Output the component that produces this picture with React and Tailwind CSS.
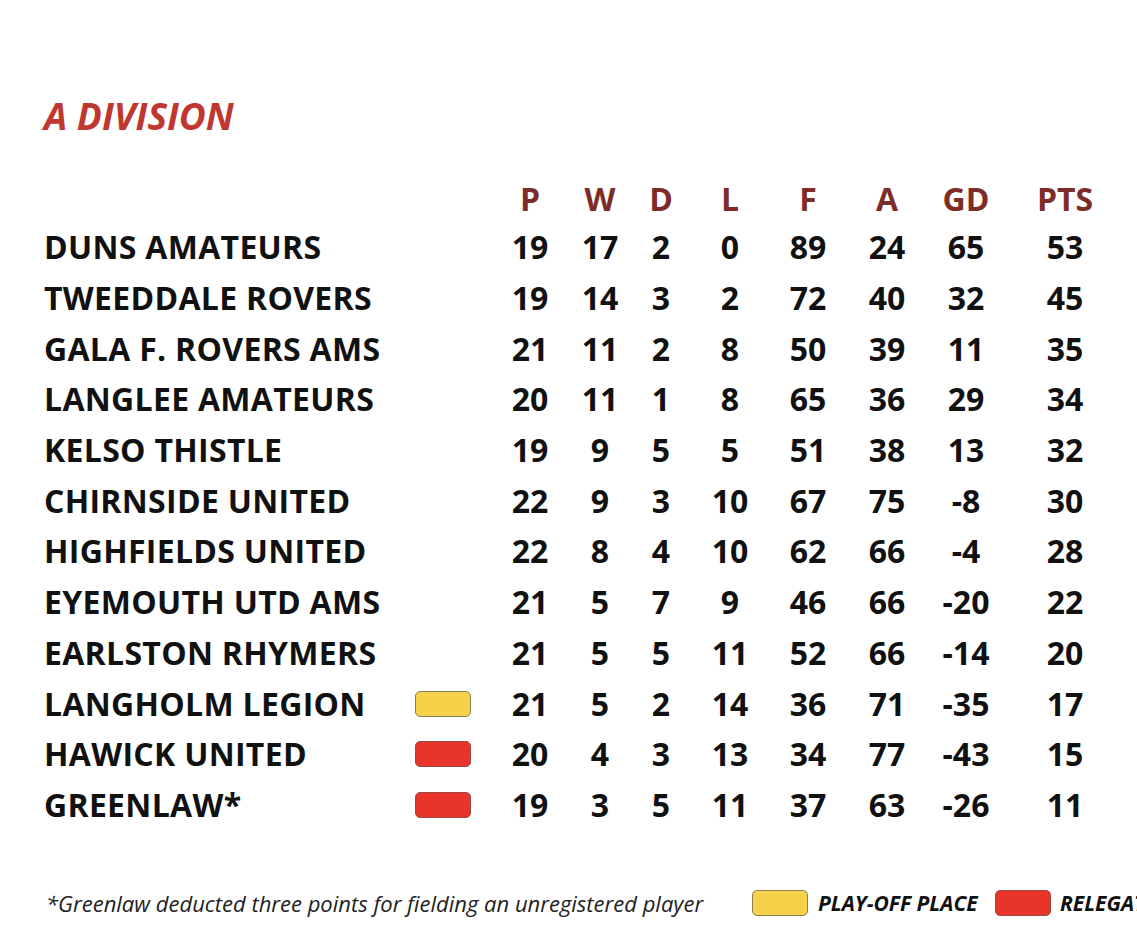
import React from 'react';

const teams = [
  { name: 'DUNS AMATEURS', p: 19, w: 17, d: 2, l: 0, f: 89, a: 24, gd: 65, pts: 53 },
  { name: 'TWEEDDALE ROVERS', p: 19, w: 14, d: 3, l: 2, f: 72, a: 40, gd: 32, pts: 45 },
  { name: 'GALA F. ROVERS AMS', p: 21, w: 11, d: 2, l: 8, f: 50, a: 39, gd: 11, pts: 35 },
  { name: 'LANGLEE AMATEURS', p: 20, w: 11, d: 1, l: 8, f: 65, a: 36, gd: 29, pts: 34 },
  { name: 'KELSO THISTLE', p: 19, w: 9, d: 5, l: 5, f: 51, a: 38, gd: 13, pts: 32 },
  { name: 'CHIRNSIDE UNITED', p: 22, w: 9, d: 3, l: 10, f: 67, a: 75, gd: -8, pts: 30 },
  { name: 'HIGHFIELDS UNITED', p: 22, w: 8, d: 4, l: 10, f: 62, a: 66, gd: -4, pts: 28 },
  { name: 'EYEMOUTH UTD AMS', p: 21, w: 5, d: 7, l: 9, f: 46, a: 66, gd: -20, pts: 22 },
  { name: 'EARLSTON RHYMERS', p: 21, w: 5, d: 5, l: 11, f: 52, a: 66, gd: -14, pts: 20 },
  { name: 'LANGHOLM LEGION', p: 21, w: 5, d: 2, l: 14, f: 36, a: 71, gd: -35, pts: 17, mark: 'playoff' },
  { name: 'HAWICK UNITED', p: 20, w: 4, d: 3, l: 13, f: 34, a: 77, gd: -43, pts: 15, mark: 'relegation' },
  { name: 'GREENLAW*', p: 19, w: 3, d: 5, l: 11, f: 37, a: 63, gd: -26, pts: 11, mark: 'relegation' },
];

const cols = 'grid grid-cols-[356px_95px_70px_70px_52px_86px_70px_88px_70px_128px] items-center';

const Badge = ({ type }) => (
  <div
    className={`shrink-0 w-[56px] h-[26px] rounded-[5px] border-[1.5px] ${
      type === 'playoff' ? 'bg-[#f5d24a] border-[#8c7f55]' : 'bg-[#e8342a] border-[#9a4a44]'
    }`}
  />
);

const App = () => {
  const headers = ['P', 'W', 'D', 'L', 'F', 'A', 'GD', 'PTS'];
  return (
    <div className="w-[1137px] h-[940px] overflow-hidden bg-white pl-[44px] pt-[96px] font-['Open_Sans','Liberation_Sans',sans-serif] text-[#111]">
      <h1 className="h-[40px] leading-[40px] text-[37px] font-bold italic text-[#c0372f]">A DIVISION</h1>

      {/* tabulka */}
      <div className="mt-[40px]">
        <div className={`${cols} h-[46px] text-[32px] leading-none font-bold text-[#7e2c28]`}>
          <div />
          <div />
          {headers.map((h) => (
            <div key={h} className="text-center">{h}</div>
          ))}
        </div>

        {teams.map((t, index) => (
          <div key={index} className={`${cols} h-[50.7px] text-[32px] leading-none font-bold`}>
            <div className="whitespace-nowrap tracking-[0.3px]">{t.name}</div>
            <div className="pl-[15px] flex items-center">{t.mark && <Badge type={t.mark} />}</div>
            <div className="text-center">{t.p}</div>
            <div className="text-center">{t.w}</div>
            <div className="text-center">{t.d}</div>
            <div className="text-center">{t.l}</div>
            <div className="text-center">{t.f}</div>
            <div className="text-center">{t.a}</div>
            <div className="text-center">{t.gd}</div>
            <div className="text-center">{t.pts}</div>
          </div>
        ))}
      </div>

      <div className="mt-[58px] h-[30px] flex items-center whitespace-nowrap pl-[2px]">
        <span className="shrink-0 w-[706px] text-[22px] italic text-[#222]">
          *Greenlaw deducted three points for fielding an unregistered player
        </span>
        <Badge type="playoff" />
        <span className="shrink-0 ml-[10px] w-[177px] text-[21px] font-bold italic">PLAY-OFF PLACE</span>
        <Badge type="relegation" />
        <span className="shrink-0 ml-[9px] text-[21px] font-bold italic">RELEGATION</span>
      </div>
    </div>
  );
};

export default App;
